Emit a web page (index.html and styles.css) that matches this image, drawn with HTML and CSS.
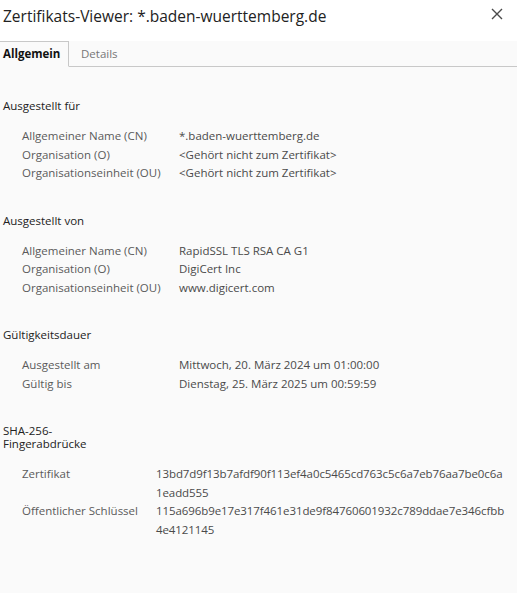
FILE: index.html
```html
<!DOCTYPE html>
<html lang="de">
<head>
<meta charset="utf-8">
<title>Zertifikats-Viewer</title>
<link rel="stylesheet" href="styles.css">
</head>
<body>
<div class="dialog">
  <header class="titlebar">
    <h1 class="title">Zertifikats-Viewer: *.baden-wuerttemberg.de</h1>
    <button class="close" aria-label="Schließen">
      <svg width="12" height="12" viewBox="0 0 12 12"><path d="M1 1 L11 11 M11 1 L1 11" stroke="#4a4a4a" stroke-width="1.4" fill="none"/></svg>
    </button>
  </header>
  <nav class="tabs">
    <div class="tab active">Allgemein</div>
    <div class="tab">Details</div>
    <div class="tab-fill"></div>
  </nav>
  <main class="content">
    <section class="section">
      <h2 class="sec-title">Ausgestellt für</h2>
      <div class="rows wide">
        <div class="label">Allgemeiner Name (CN)</div><div class="value">*.baden-wuerttemberg.de</div>
        <div class="label">Organisation (O)</div><div class="value">&lt;Gehört nicht zum Zertifikat&gt;</div>
        <div class="label">Organisationseinheit (OU)</div><div class="value">&lt;Gehört nicht zum Zertifikat&gt;</div>
      </div>
    </section>
    <section class="section">
      <h2 class="sec-title">Ausgestellt von</h2>
      <div class="rows wide">
        <div class="label">Allgemeiner Name (CN)</div><div class="value">RapidSSL TLS RSA CA G1</div>
        <div class="label">Organisation (O)</div><div class="value">DigiCert Inc</div>
        <div class="label">Organisationseinheit (OU)</div><div class="value">www.digicert.com</div>
      </div>
    </section>
    <section class="section">
      <h2 class="sec-title">Gültigkeitsdauer</h2>
      <div class="rows wide">
        <div class="label">Ausgestellt am</div><div class="value">Mittwoch, 20. März 2024 um 01:00:00</div>
        <div class="label">Gültig bis</div><div class="value">Dienstag, 25. März 2025 um 00:59:59</div>
      </div>
    </section>
    <section class="section">
      <h2 class="sec-title narrow">SHA-256-Fingerabdrücke</h2>
      <div class="rows hash">
        <div class="label">Zertifikat</div><div class="value"><span class="line">13bd7d9f13b7afdf90f113ef4a0c5465cd763c5c6a7eb76aa7be0c6a</span><span class="line">1eadd555</span></div>
        <div class="label">Öffentlicher Schlüssel</div><div class="value"><span class="line">115a696b9e17e317f461e31de9f84760601932c789ddae7e346cfbb</span><span class="line">4e4121145</span></div>
      </div>
    </section>
  </main>
</div>
</body>
</html>
```
FILE: styles.css
```css
html, body {
  margin: 0;
  padding: 0;
  background: #fafafa;
}
body {
  font-family: "Open Sans", "Noto Sans", sans-serif;
  font-size: 11.5px;
  color: #555;
}
.dialog {
  width: 517px;
  min-height: 593px;
  background: #fafafa;
}
.titlebar {
  height: 41px;
  background: #ffffff;
  display: flex;
  align-items: flex-start;
  justify-content: space-between;
}
.title {
  margin: 0;
  padding: 5px 0 0 3px;
  font-size: 15.5px;
  font-weight: 400;
  color: #222;
  line-height: 22px;
}
.close {
  border: 0;
  background: transparent;
  padding: 0;
  margin: 8px 14px 0 0;
  width: 12px;
  height: 12px;
  display: flex;
}
.tabs {
  display: flex;
  height: 26px;
}
.tab {
  box-sizing: border-box;
  height: 26px;
  line-height: 25px;
  padding: 0 12px 0 3px;
  color: #777;
  border-bottom: 1px solid #c8c8c8;
}
.tab.active {
  font-weight: 700;
  color: #111;
  padding: 0 8px 0 3px;
  width: 69px;
  border-top: 1px solid #c8c8c8;
  border-right: 1px solid #c8c8c8;
  border-bottom: 1px solid transparent;
  line-height: 24px;
}
.tab + .tab:not(.active) {
  padding-left: 12px;
}
.tab-fill {
  flex: 1;
  border-bottom: 1px solid #c8c8c8;
}
.content {
  padding: 1px 0 40px 0;
}
.section {
  margin-top: 31px;
}
.sec-title {
  margin: 0 0 15px 3px;
  font-size: 11.5px;
  font-weight: 400;
  color: #222;
  line-height: 13px;
}
.sec-title.narrow {
  width: 90px;
}
.rows {
  display: grid;
  padding-left: 22px;
  line-height: 18.5px;
}
.rows.wide {
  grid-template-columns: 157px 1fr;
}
.rows.hash {
  grid-template-columns: 134px 1fr;
}
.rows.hash .value {
  letter-spacing: -0.09px;
}
.label {
  color: #5a5a5a;
}
.value {
  color: #4a4a4a;
}
.line {
  display: block;
}
```
